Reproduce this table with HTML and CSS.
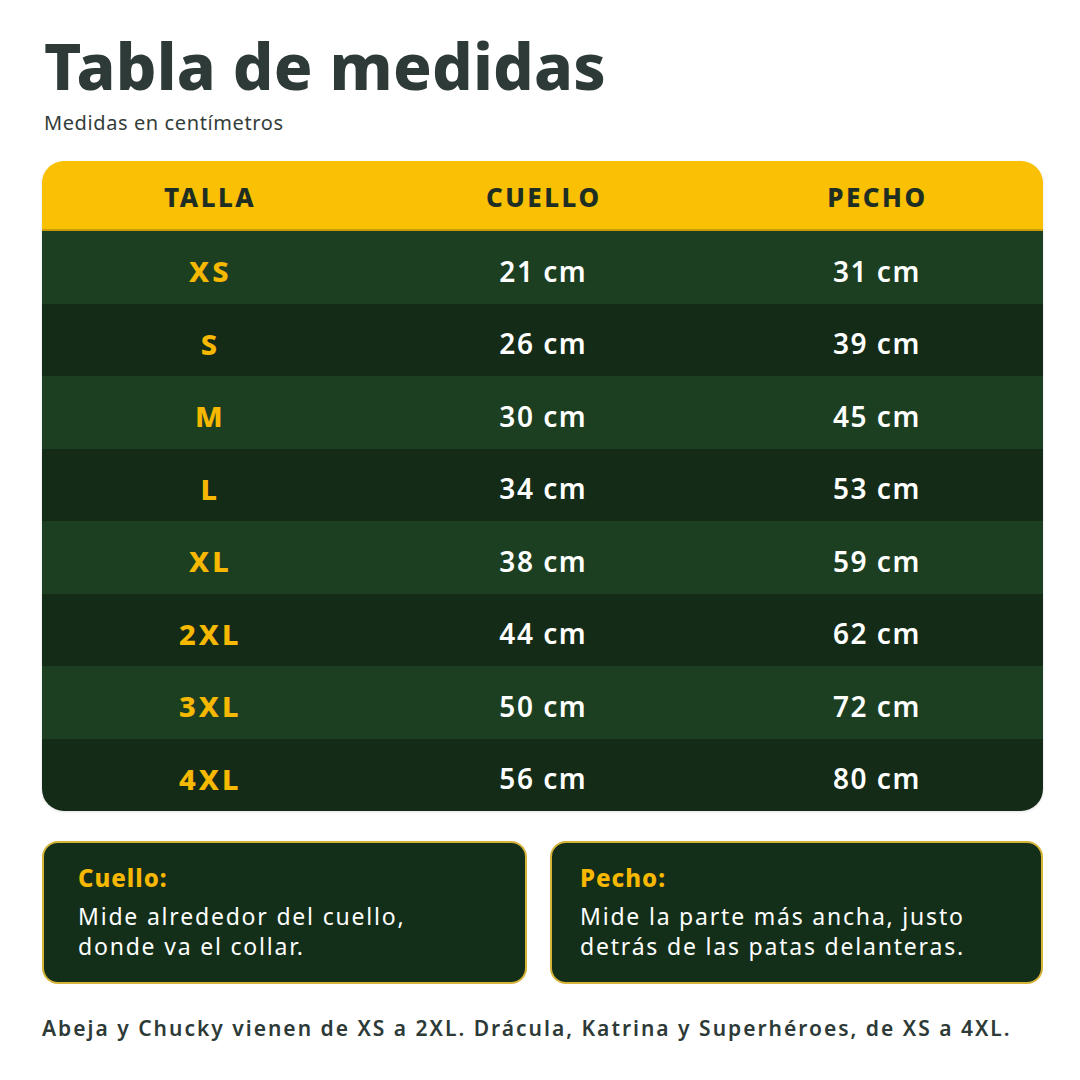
FILE: index.html
```html
<!DOCTYPE html>
<html lang="es">
<head>
<meta charset="utf-8">
<title>Tabla de medidas</title>
<link rel="stylesheet" href="styles.css">
</head>
<body>
<main class="page">
  <header class="head">
    <h1 class="title">Tabla de medidas</h1>
    <p class="subtitle">Medidas en centímetros</p>
  </header>

  <section class="table">
    <div class="row row-head">
      <div class="cell">TALLA</div>
      <div class="cell">CUELLO</div>
      <div class="cell">PECHO</div>
    </div>
    <div class="row light"><div class="cell size">XS</div><div class="cell">21 cm</div><div class="cell">31 cm</div></div>
    <div class="row dark"><div class="cell size">S</div><div class="cell">26 cm</div><div class="cell">39 cm</div></div>
    <div class="row light"><div class="cell size">M</div><div class="cell">30 cm</div><div class="cell">45 cm</div></div>
    <div class="row dark"><div class="cell size">L</div><div class="cell">34 cm</div><div class="cell">53 cm</div></div>
    <div class="row light"><div class="cell size">XL</div><div class="cell">38 cm</div><div class="cell">59 cm</div></div>
    <div class="row dark"><div class="cell size">2XL</div><div class="cell">44 cm</div><div class="cell">62 cm</div></div>
    <div class="row light"><div class="cell size">3XL</div><div class="cell">50 cm</div><div class="cell">72 cm</div></div>
    <div class="row dark"><div class="cell size">4XL</div><div class="cell">56 cm</div><div class="cell">80 cm</div></div>
  </section>

  <section class="notes">
    <div class="note note-left">
      <h2 class="note-title">Cuello:</h2>
      <p class="note-text">Mide alrededor del cuello,<br>donde va el collar.</p>
    </div>
    <div class="note note-right">
      <h2 class="note-title">Pecho:</h2>
      <p class="note-text">Mide la parte más ancha, justo<br>detrás de las patas delanteras.</p>
    </div>
  </section>

  <p class="footer">Abeja y Chucky vienen de XS a 2XL. Drácula, Katrina y Superhéroes, de XS a 4XL.</p>
</main>
</body>
</html>
```

FILE: styles.css
```css
* { box-sizing: border-box; }

html, body {
  margin: 0;
  padding: 0;
  background: #ffffff;
}

body {
  width: 1080px;
  height: 1080px;
  font-family: "Noto Sans", "Open Sans", sans-serif;
  color: #2d3a37;
}

.page {
  padding: 26px 37px 0 42px;
  display: flex;
  flex-direction: column;
}

.head {
  padding-left: 2px;
}

.title {
  margin: 0;
  font-size: 64px;
  line-height: 80px;
  font-weight: 800;
  letter-spacing: 0.2px;
  color: #2d3a37;
}

.subtitle {
  margin: 3px 0 0;
  font-size: 20px;
  line-height: 28px;
  letter-spacing: 0.6px;
  color: #333d3a;
}

.table {
  margin-top: 24px;
  border-radius: 22px;
  overflow: hidden;
  display: flex;
  flex-direction: column;
  box-shadow: 0 1px 3px rgba(0,0,0,0.12);
}

.row {
  display: grid;
  grid-template-columns: 1fr 1fr 1fr;
  height: 72.5px;
  align-items: center;
  padding-top: 7px;
}

.row-head {
  height: 70px;
  background: #f9c004;
  padding-top: 3px;
  border-bottom: 2px solid #c89c08;
}

.light { background: #1c3f22; }
.dark { background: #132b17; }

.cell {
  text-align: center;
  font-size: 28px;
  font-weight: 600;
  letter-spacing: 1.5px;
  padding-left: 1.5px;
  color: #ffffff;
}

.row-head .cell {
  color: #1f2e22;
  font-size: 26px;
  font-weight: 800;
  letter-spacing: 2.5px;
  padding-left: 2.5px;
}

.cell.size {
  color: #f6b800;
  font-weight: 800;
  font-size: 29px;
  letter-spacing: 3px;
  padding-left: 3px;
}

.notes {
  margin-top: 30px;
  display: grid;
  grid-template-columns: 485px 493px;
  gap: 23px;
}

.note {
  height: 143px;
  background: #142f19;
  border: 2px solid #d6b43a;
  border-radius: 16px;
  padding: 20px 0 0 34px;
}

.note-right {
  padding-left: 28px;
}

.note-title {
  margin: 0;
  font-size: 24px;
  line-height: 30px;
  font-weight: 800;
  letter-spacing: 1px;
  color: #f6b800;
}

.note-text {
  margin: 8px 0 0;
  font-size: 23px;
  line-height: 30px;
  letter-spacing: 1.8px;
  color: #ffffff;
}

.footer {
  margin: 30px 0 0;
  font-size: 21px;
  line-height: 28px;
  font-weight: 600;
  letter-spacing: 2px;
  color: #2d3a37;
}
```
